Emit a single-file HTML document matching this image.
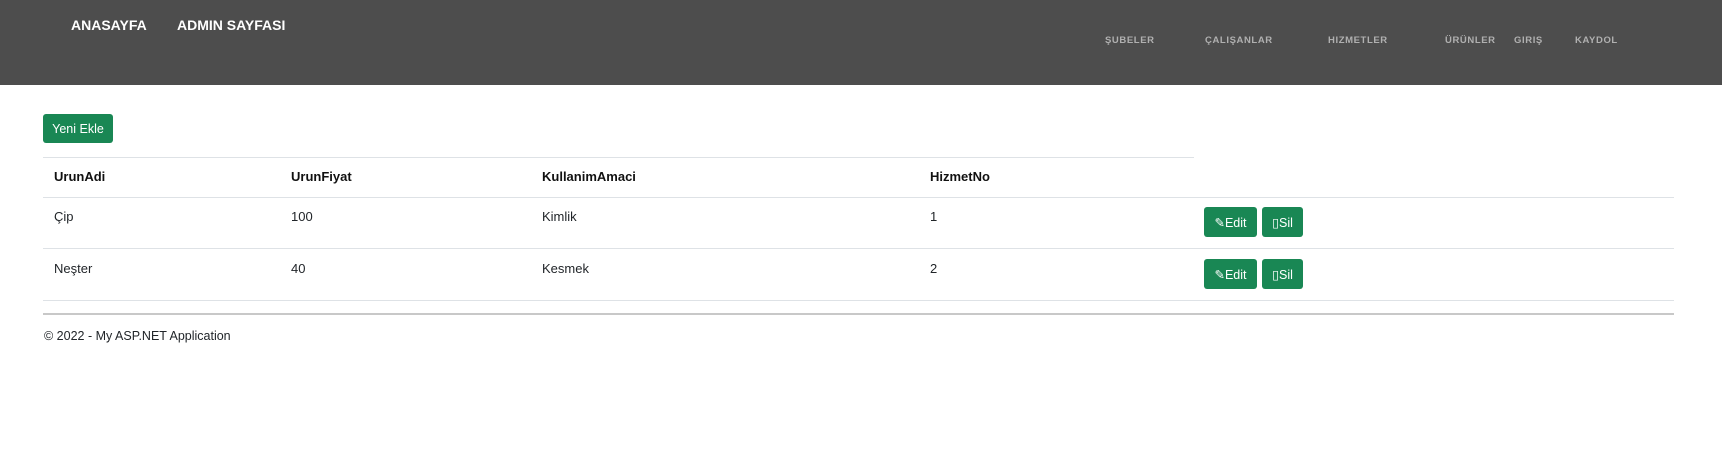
<!DOCTYPE html>
<html><head><meta charset="utf-8"><style>
*{margin:0;padding:0;box-sizing:border-box}
body{width:1722px;height:452px;background:#fff;font-family:"Liberation Sans",sans-serif;color:#212529;position:relative;overflow:hidden}
.nav{position:absolute;left:0;top:0;width:1722px;height:85px;background:#4d4d4d}
.t{position:absolute;white-space:nowrap;line-height:1}
.l{color:#fff;font-weight:bold;font-size:14px;top:18px}
.r{color:#b0b0b0;font-weight:bold;font-size:9.5px;letter-spacing:.6px;top:36px}
.btn{position:absolute;background:#198754;color:#fff;border-radius:3px;font-size:12.5px;display:flex;align-items:center;justify-content:center}
.line{position:absolute;height:1px;background:#dee2e6}
.c{position:absolute;font-size:13px;line-height:1}
.h{font-weight:bold;color:#111}
</style></head><body>
<div class="nav"></div>
<div class="t l" style="left:71px">ANASAYFA</div>
<div class="t l" style="left:177px">ADMIN SAYFASI</div>
<div class="t r" style="left:1105px">ŞUBELER</div>
<div class="t r" style="left:1205px">ÇALIŞANLAR</div>
<div class="t r" style="left:1328px">HIZMETLER</div>
<div class="t r" style="left:1445px">ÜRÜNLER</div>
<div class="t r" style="left:1514px">GIRIŞ</div>
<div class="t r" style="left:1575px">KAYDOL</div>
<div class="btn" style="left:43px;top:114px;width:70px;height:29px">Yeni Ekle</div>
<div class="line" style="left:43px;width:1151px;top:157px"></div>
<div class="line" style="left:43px;width:1631px;top:197px"></div>
<div class="line" style="left:43px;width:1631px;top:248px"></div>
<div class="line" style="left:43px;width:1631px;top:300px"></div>
<div class="c h" style="left:54px;top:170px">UrunAdi</div>
<div class="c h" style="left:291px;top:170px">UrunFiyat</div>
<div class="c h" style="left:542px;top:170px">KullanimAmaci</div>
<div class="c h" style="left:930px;top:170px">HizmetNo</div>
<div class="c" style="left:54px;top:210px">Çip</div>
<div class="c" style="left:291px;top:210px">100</div>
<div class="c" style="left:542px;top:210px">Kimlik</div>
<div class="c" style="left:930px;top:210px">1</div>
<div class="c" style="left:54px;top:262px">Neşter</div>
<div class="c" style="left:291px;top:262px">40</div>
<div class="c" style="left:542px;top:262px">Kesmek</div>
<div class="c" style="left:930px;top:262px">2</div>
<div class="btn" style="left:1204px;top:207px;width:53px;height:30px">✎Edit</div>
<div class="btn" style="left:1262px;top:207px;width:41px;height:30px">▯Sil</div>
<div class="btn" style="left:1204px;top:259px;width:53px;height:30px">✎Edit</div>
<div class="btn" style="left:1262px;top:259px;width:41px;height:30px">▯Sil</div>
<div style="position:absolute;left:43px;width:1631px;top:313px;height:2px;background:#c8c8c8"></div>
<div class="c" style="left:44px;top:330px;font-size:12.5px">© 2022 - My ASP.NET Application</div>
</body></html>
